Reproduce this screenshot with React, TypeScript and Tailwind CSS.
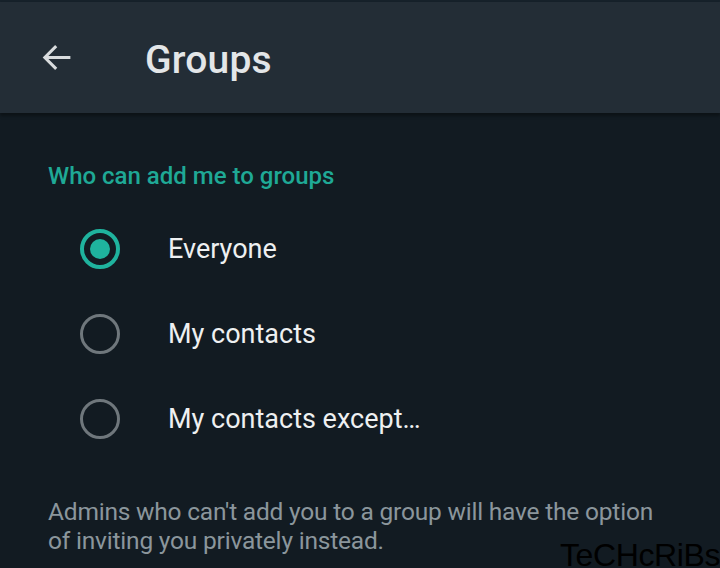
export default function App() {
  const options = [
    { label: "Everyone", checked: true },
    { label: "My contacts", checked: false },
    { label: "My contacts except…", checked: false },
  ];

  return (
    <div
      className="relative w-[720px] h-[568px] overflow-hidden bg-[#121b22]"
      style={{ fontFamily: "Roboto, 'Noto Sans', sans-serif" }}
    >
      <div className="h-[2px] bg-[#16212a]" />
      <header className="h-[111px] bg-[#232d36] flex items-center shadow-[0_3px_3px_rgba(0,0,0,0.35)]">
        <svg
          className="ml-[40px] w-[33px] h-[33px] -mt-[1px]"
          viewBox="0 0 24 24"
          fill="none"
          stroke="#d9dcde"
          strokeWidth="2.2"
          strokeLinecap="square"
        >
          <path d="M21 12H4M11 4.5 3.5 12l7.5 7.5" />
        </svg>
        <h1 className="ml-[72px] text-[39px] font-medium text-[#e3e6e8] tracking-[0.2px] mt-[6px]">
          Groups
        </h1>
      </header>

      <div className="pl-[48px] pt-[47px]">
        <h2 className="text-[24px] font-medium text-[#1fa996] leading-[32px]">
          Who can add me to groups
        </h2>
      </div>

      <div className="mt-[14px] flex flex-col">
        {options.map((o) => (
          <div key={o.label} className="h-[85px] flex items-center">
            <div className="ml-[80px] w-[40px] h-[40px] flex items-center justify-center">
              {o.checked ? (
                <div className="w-[40px] h-[40px] rounded-full border-[4px] border-[#1fb39e] flex items-center justify-center">
                  <div className="w-[20px] h-[20px] rounded-full bg-[#1fb39e]" />
                </div>
              ) : (
                <div className="w-[40px] h-[40px] rounded-full border-[3px] border-[#6f777c]" />
              )}
            </div>
            <span className="ml-[48px] text-[27px] text-[#eef0f1] mt-[2px]">
              {o.label}
            </span>
          </div>
        ))}
      </div>

      <div className="mt-[36px] ml-[48px] flex flex-col items-start text-[24.5px] leading-[29px] text-[#8b969c] tracking-[-0.2px]">
        <span>Admins who can't add you to a group will have the option</span>
        <span>of inviting you privately instead.</span>
      </div>

      <div
        className="absolute right-0 bottom-0 text-[32px] leading-[26px] text-black tracking-[-0.4px]"
        style={{ fontFamily: "'Liberation Sans', Arial, sans-serif" }}
      >
        TeCHcRiBs
      </div>
    </div>
  );
}
